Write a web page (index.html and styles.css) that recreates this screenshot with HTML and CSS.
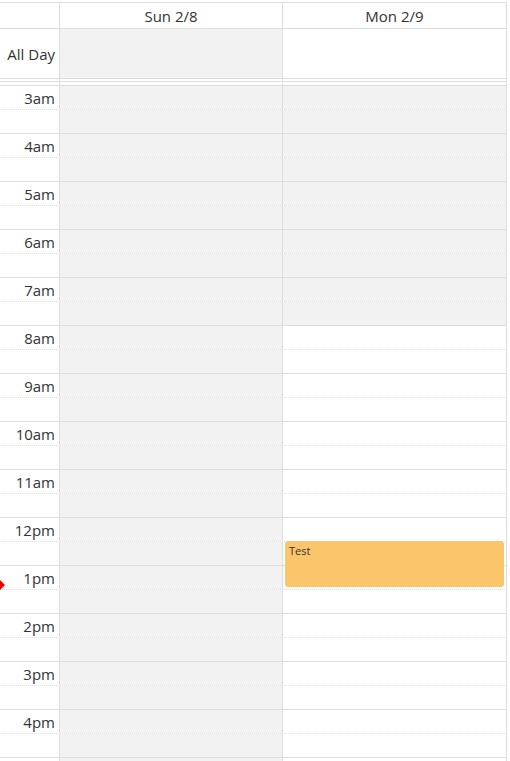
FILE: index.html
```html
<!DOCTYPE html>
<html>
<head>
<meta charset="utf-8">
<link rel="stylesheet" href="styles.css">
</head>
<body>
<div class="cal">
  <div class="row head">
    <div class="cell"></div>
    <div class="cell">Sun 2/8</div>
    <div class="cell">Mon 2/9</div>
  </div>
  <div class="row allday">
    <div class="cell label">All Day</div>
    <div class="cell off"></div>
    <div class="cell"></div>
  </div>
  <div class="row gap1"><div class="cell"></div><div class="cell"></div><div class="cell"></div></div>
  <div class="row gap2"><div class="cell"></div><div class="cell"></div><div class="cell"></div></div>
  <div class="body">
    <div class="row slot hour"><div class="cell time">3am</div><div class="cell off"></div><div class="cell off"></div></div>
    <div class="row slot half"><div class="cell"></div><div class="cell off"></div><div class="cell off"></div></div>
    <div class="row slot hour"><div class="cell time">4am</div><div class="cell off"></div><div class="cell off"></div></div>
    <div class="row slot half"><div class="cell"></div><div class="cell off"></div><div class="cell off"></div></div>
    <div class="row slot hour"><div class="cell time">5am</div><div class="cell off"></div><div class="cell off"></div></div>
    <div class="row slot half"><div class="cell"></div><div class="cell off"></div><div class="cell off"></div></div>
    <div class="row slot hour"><div class="cell time">6am</div><div class="cell off"></div><div class="cell off"></div></div>
    <div class="row slot half"><div class="cell"></div><div class="cell off"></div><div class="cell off"></div></div>
    <div class="row slot hour"><div class="cell time">7am</div><div class="cell off"></div><div class="cell off"></div></div>
    <div class="row slot half"><div class="cell"></div><div class="cell off"></div><div class="cell off"></div></div>
    <div class="row slot hour"><div class="cell time">8am</div><div class="cell off"></div><div class="cell"></div></div>
    <div class="row slot half"><div class="cell"></div><div class="cell off"></div><div class="cell"></div></div>
    <div class="row slot hour"><div class="cell time">9am</div><div class="cell off"></div><div class="cell"></div></div>
    <div class="row slot half"><div class="cell"></div><div class="cell off"></div><div class="cell"></div></div>
    <div class="row slot hour"><div class="cell time">10am</div><div class="cell off"></div><div class="cell"></div></div>
    <div class="row slot half"><div class="cell"></div><div class="cell off"></div><div class="cell"></div></div>
    <div class="row slot hour"><div class="cell time">11am</div><div class="cell off"></div><div class="cell"></div></div>
    <div class="row slot half"><div class="cell"></div><div class="cell off"></div><div class="cell"></div></div>
    <div class="row slot hour"><div class="cell time">12pm</div><div class="cell off"></div><div class="cell"></div></div>
    <div class="row slot half"><div class="cell"></div><div class="cell off"></div><div class="cell"></div></div>
    <div class="row slot hour"><div class="cell time">1pm</div><div class="cell off"></div><div class="cell"></div></div>
    <div class="row slot half"><div class="cell"></div><div class="cell off"></div><div class="cell"></div></div>
    <div class="row slot hour"><div class="cell time">2pm</div><div class="cell off"></div><div class="cell"></div></div>
    <div class="row slot half"><div class="cell"></div><div class="cell off"></div><div class="cell"></div></div>
    <div class="row slot hour"><div class="cell time">3pm</div><div class="cell off"></div><div class="cell"></div></div>
    <div class="row slot half"><div class="cell"></div><div class="cell off"></div><div class="cell"></div></div>
    <div class="row slot hour"><div class="cell time">4pm</div><div class="cell off"></div><div class="cell"></div></div>
    <div class="row slot half"><div class="cell"></div><div class="cell off"></div><div class="cell"></div></div>
    <div class="row slot hour"><div class="cell"></div><div class="cell off"></div><div class="cell"></div></div>

    <div class="event">Test</div>
    <div class="now-arrow"></div>
  </div>
</div>
</body>
</html>
```

FILE: styles.css
```css
html, body {
  margin: 0;
  padding: 0;
  overflow: hidden;
  background: #fff;
}

.cal {
  width: 507px;
  margin-top: 2px;
  border-top: 1px solid #ddd;
  font-family: "Open Sans", "Liberation Sans", sans-serif;
  font-size: 15px;
  color: #333;
}

.row {
  display: grid;
  grid-template-columns: 60px 223px 224px;
}

.cell {
  border-right: 1px solid #ddd;
  box-sizing: border-box;
}

.head {
  height: 26px;
  border-bottom: 1px solid #ddd;
  box-sizing: border-box;
}

.head .cell {
  display: flex;
  align-items: center;
  justify-content: center;
  line-height: 1;
  padding-top: 1px;
}

.allday {
  height: 50px;
  border-bottom: 1px solid #ddd;
  box-sizing: border-box;
}

.label {
  display: flex;
  align-items: center;
  justify-content: flex-end;
  padding-right: 4px;
  padding-top: 1px;
}

.off {
  background: #f2f2f2;
}

.gap1 {
  height: 3px;
  border-bottom: 1px solid #ddd;
  box-sizing: border-box;
}

.gap2 {
  height: 3px;
}

.body {
  position: relative;
  height: 676px;
  overflow: hidden;
}

.slot {
  height: 24px;
  box-sizing: border-box;
}

.slot.hour {
  border-top: 1px solid #ddd;
}

.slot.half {
  border-top: 1px dotted #ddd;
}

.time {
  display: flex;
  align-items: center;
  justify-content: flex-end;
  padding-right: 4px;
  line-height: 1;
  padding-top: 1px;
}

.event {
  position: absolute;
  top: 456px;
  left: 285px;
  width: 219px;
  height: 46px;
  box-sizing: border-box;
  background: #fbc56c;
  border: 1px solid #fbc56c;
  border-radius: 3px;
  padding: 2px 3px;
  font-size: 11px;
  line-height: 14px;
  color: #333;
}

.now-arrow {
  position: absolute;
  top: 495px;
  left: 0;
  width: 0;
  height: 0;
  border-left: 5px solid #e00;
  border-top: 5px solid transparent;
  border-bottom: 5px solid transparent;
}
```
